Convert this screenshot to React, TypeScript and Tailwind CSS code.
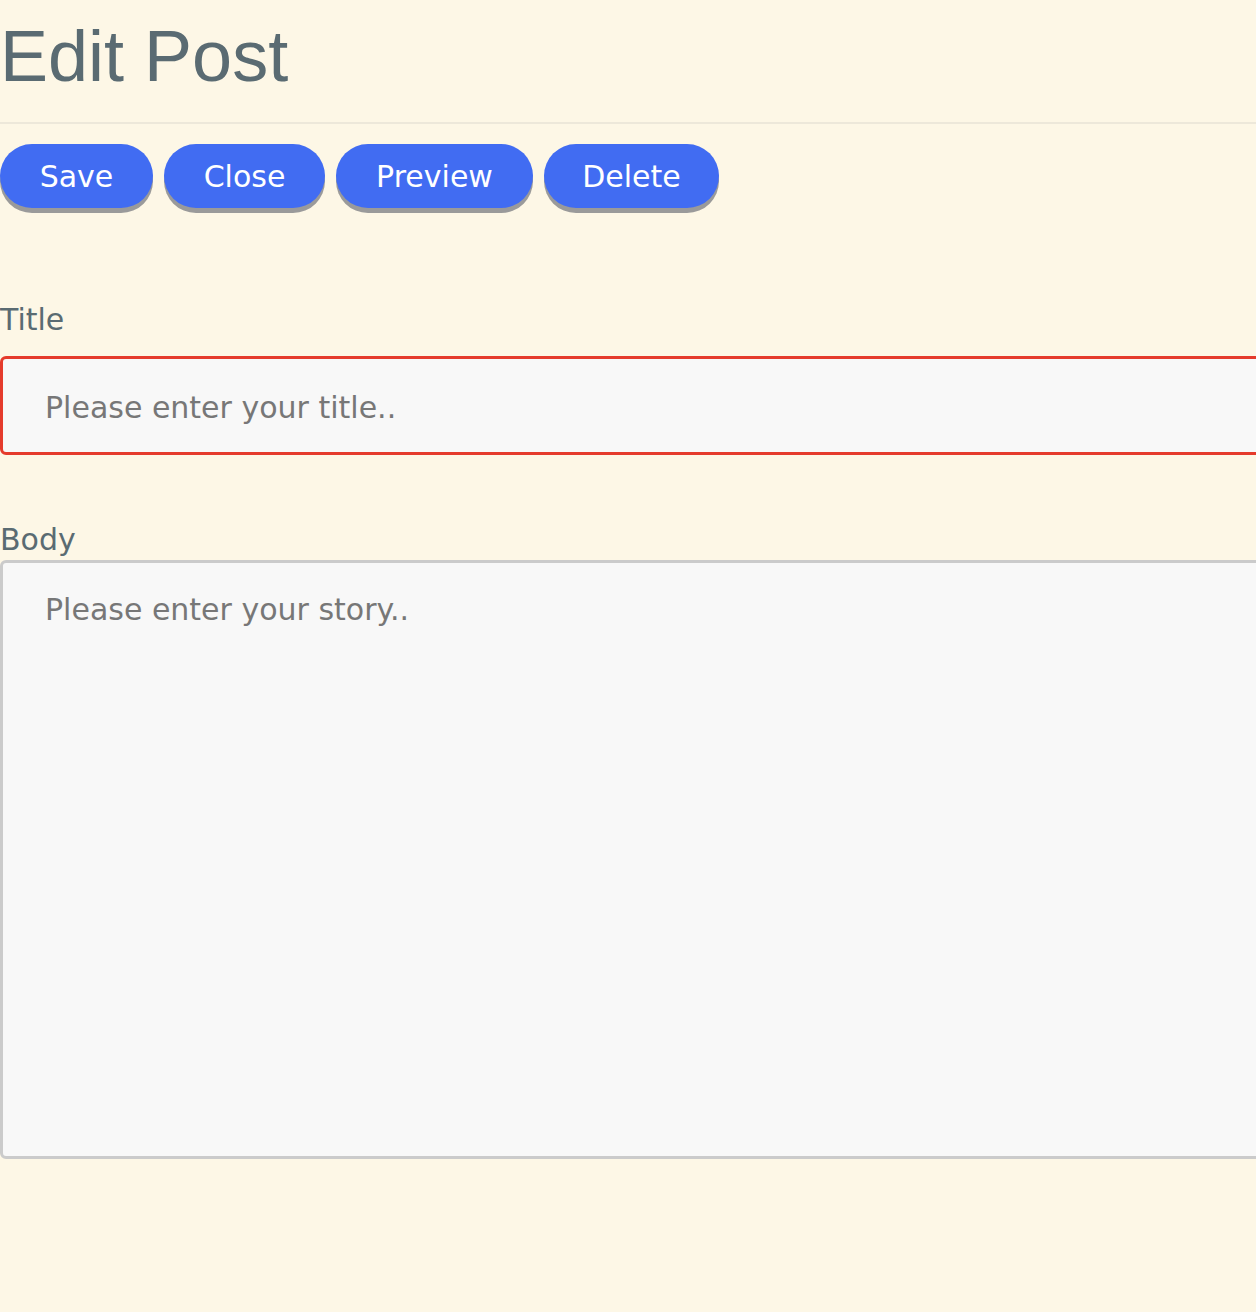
import React from "react";

export default function App() {
  const btn =
    "h-[64px] rounded-full bg-[#416cf2] text-white text-[30px] shadow-[0_5px_0_#9a9a9a] font-['DejaVu_Sans',Verdana,sans-serif] leading-none pt-[2px]";
  return (
    <div className="min-h-[1312px] w-[1256px] overflow-hidden bg-[#fdf7e6]">
      <h1 className="pt-[14px] pb-[24px] text-[72px] leading-[84px] text-[#5a6b72] font-['Liberation_Sans',Arial,sans-serif]">
        Edit Post
      </h1>
      <div className="h-[2px] bg-[#ede8da]" />
      <div className="mt-[20px] flex gap-[11px]">
        <button className={`${btn} w-[153px]`}>Save</button>
        <button className={`${btn} w-[161px]`}>Close</button>
        <button className={`${btn} w-[197px]`}>Preview</button>
        <button className={`${btn} w-[175px]`}>Delete</button>
      </div>
      <div className="mt-[94px] font-['DejaVu_Sans',Verdana,sans-serif]">
        <label className="block text-[30px] leading-[36px] text-[#5a6b72]">Title</label>
        <input
          placeholder="Please enter your title.."
          className="mt-[18px] block h-[99px] w-[1300px] rounded-[6px] border-[3px] border-[#e53b2c] bg-[#f8f8f8] px-[42px] pt-[3px] text-[30px] text-[#555] placeholder:text-[#777] outline-none"
        />
        <label className="mt-[67px] block text-[30px] leading-[36px] text-[#5a6b72]">Body</label>
        <textarea
          placeholder="Please enter your story.."
          className="mt-[2px] block h-[599px] w-[1300px] resize-none rounded-[6px] border-[3px] border-[#cbcbcb] bg-[#f8f8f8] px-[42px] pt-[29px] text-[30px] leading-[36px] text-[#555] placeholder:text-[#777] outline-none"
        />
      </div>
    </div>
  );
}
